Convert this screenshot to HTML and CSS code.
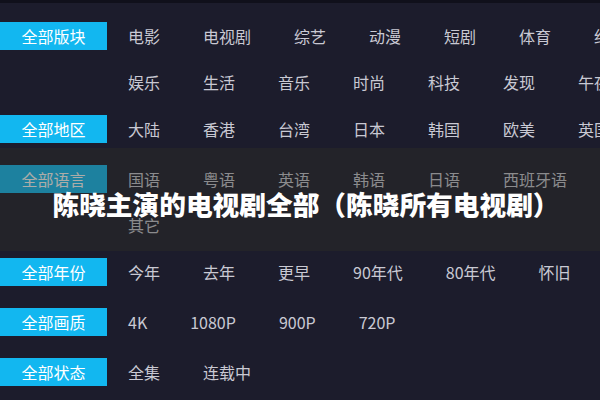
FILE: index.html
```html
<!DOCTYPE html>
<html lang="zh-CN">
<head>
<meta charset="utf-8">
<title>陈晓主演的电视剧全部</title>
<link rel="stylesheet" href="styles.css">
</head>
<body>
<div class="topbar"></div>
<div class="page">
  <div class="group">
    <div class="label">全部版块</div>
    <ul class="items">
      <li>电影</li><li>电视剧</li><li>综艺</li><li>动漫</li><li>短剧</li><li>体育</li><li>纪录</li>
      <li>娱乐</li><li>生活</li><li>音乐</li><li>时尚</li><li>科技</li><li>发现</li><li>午夜</li>
    </ul>
  </div>
  <div class="group">
    <div class="label">全部地区</div>
    <ul class="items">
      <li>大陆</li><li>香港</li><li>台湾</li><li>日本</li><li>韩国</li><li>欧美</li><li>英国</li>
    </ul>
  </div>
  <div class="group">
    <div class="label">全部语言</div>
    <ul class="items">
      <li>国语</li><li>粤语</li><li>英语</li><li>韩语</li><li>日语</li><li>西班牙语</li><li>其它</li>
    </ul>
  </div>
  <div class="group">
    <div class="label">全部年份</div>
    <ul class="items">
      <li>今年</li><li>去年</li><li>更早</li><li>90年代</li><li>80年代</li><li>怀旧</li>
    </ul>
  </div>
  <div class="group">
    <div class="label">全部画质</div>
    <ul class="items">
      <li>4K</li><li>1080P</li><li>900P</li><li>720P</li>
    </ul>
  </div>
  <div class="group">
    <div class="label">全部状态</div>
    <ul class="items">
      <li>全集</li><li>连载中</li>
    </ul>
  </div>
</div>
<div class="overlay">
  <h1 class="title">陈晓主演的电视剧全部（陈晓所有电视剧）</h1>
</div>
</body>
</html>
```

FILE: styles.css
```css
html, body {
  margin: 0;
  padding: 0;
  overflow: hidden;
}
body {
  background: #1c1c2c;
  font-family: "Noto Sans CJK SC", "Noto Sans", sans-serif;
  width: 600px;
  height: 400px;
  position: relative;
}
.topbar {
  height: 3px;
  background: #10101b;
}
.page {
  width: 640px;
  padding-top: 19px;
}
.group {
  display: flex;
  align-items: flex-start;
  box-sizing: border-box;
  min-height: 50px;
  padding-bottom: 19px;
}
.label {
  flex: none;
  width: 107px;
  height: 28px;
  line-height: 28px;
  background: #12b7f0;
  color: #ffffff;
  font-size: 16px;
  text-align: center;
  margin-right: 21px;
}
.items {
  list-style: none;
  margin: 0;
  padding: 0;
  flex: none;
  width: 507px;
  display: flex;
  flex-wrap: wrap;
  column-gap: 43px;
  row-gap: 18px;
}
.items li {
  height: 28px;
  line-height: 28px;
  font-size: 16px;
  color: #c9c9d3;
  white-space: nowrap;
}
.overlay {
  position: absolute;
  left: 0;
  right: 0;
  top: 148px;
  height: 103px;
  background: rgba(48, 48, 38, 0.4);
}
.title {
  margin: 0;
  padding-top: 43px;
  padding-left: 12px;
  text-align: center;
  font-size: 26.7px;
  line-height: 26px;
  font-weight: 900;
  color: #ffffff;
  white-space: nowrap;
}
```
